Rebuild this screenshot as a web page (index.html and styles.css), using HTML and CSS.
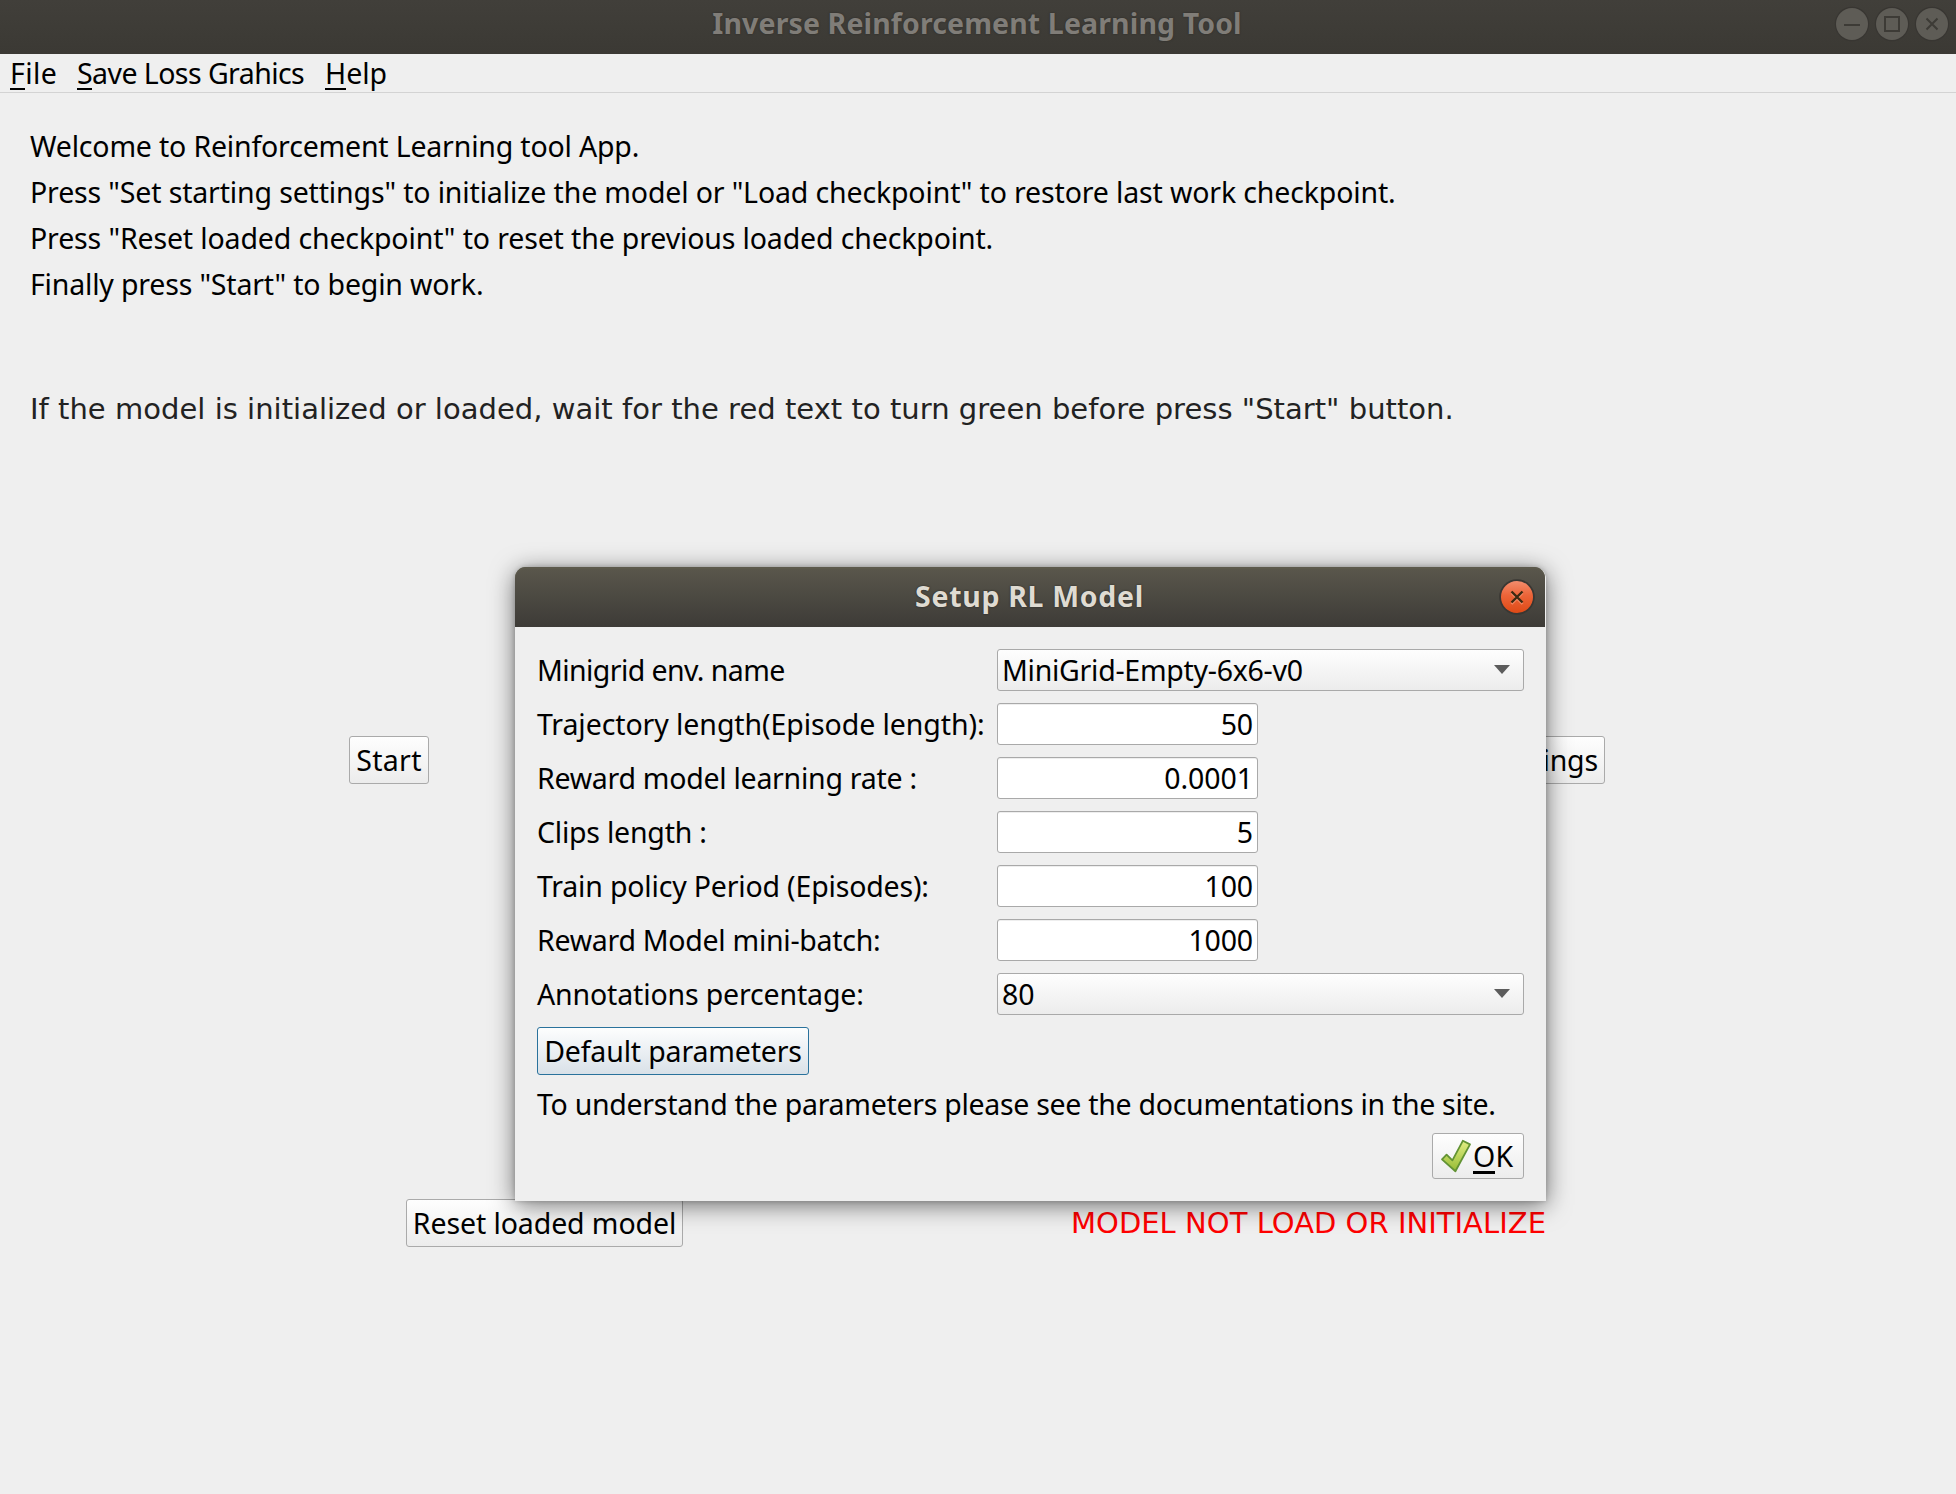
FILE: index.html
```html
<!DOCTYPE html>
<html lang="en">
<head>
<meta charset="utf-8">
<title>Inverse Reinforcement Learning Tool</title>
<link rel="stylesheet" href="styles.css">
</head>
<body>
<div class="window">
  <header class="titlebar">
    <h1 class="titlebar-text">Inverse Reinforcement Learning Tool</h1>
    <div class="window-controls">
      <svg class="control" viewBox="0 0 36 36"><circle class="ring" cx="18" cy="18" r="17.2"/><circle class="disc" cx="18" cy="18" r="16"/><path class="glyph" d="M10 19H26"/></svg>
      <svg class="control" viewBox="0 0 36 36"><circle class="ring" cx="18" cy="18" r="17.2"/><circle class="disc" cx="18" cy="18" r="16"/><path class="glyph" d="M11 11H25V25H11Z"/></svg>
      <svg class="control" viewBox="0 0 36 36"><circle class="ring" cx="18" cy="18" r="17.2"/><circle class="disc" cx="18" cy="18" r="16"/><path class="glyph" d="M12.5 12.5L23.5 23.5M23.5 12.5L12.5 23.5"/></svg>
    </div>
  </header>

  <nav class="menubar">
    <span class="menu menu-file"><span class="key">F</span>ile</span>
    <span class="menu menu-save"><span class="key">S</span>ave Loss Grahics</span>
    <span class="menu menu-help"><span class="key">H</span>elp</span>
  </nav>

  <main class="content">
    <div class="intro">
      <p class="intro-welcome">Welcome to Reinforcement Learning tool App.</p>
      <p>Press "Set starting settings" to initialize the model or "Load checkpoint" to restore last work checkpoint.</p>
      <p class="intro-reset">Press "Reset loaded checkpoint" to reset the previous loaded checkpoint.</p>
      <p class="intro-start">Finally press "Start" to begin work.</p>
    </div>
    <p class="note">If the model is initialized or loaded, wait for the red text to turn green before press "Start" button.</p>
    <div class="actions">
      <button class="button start">Start</button>
      <button class="button settings">Set starting settings</button>
    </div>
    <div class="model-row">
      <button class="button reset">Reset loaded model</button>
      <span class="status">MODEL NOT LOAD OR INITIALIZE</span>
    </div>
  </main>
</div>

<section class="dialog">
  <header class="dialog-title">
    <h2 class="dialog-title-text">Setup RL Model</h2>
    <svg class="close" viewBox="0 0 36 36">
      <defs><linearGradient id="closeFill" x1="0" y1="0" x2="0" y2="1"><stop offset="0" stop-color="#f38d6d"/><stop offset=".45" stop-color="#ec6438"/><stop offset="1" stop-color="#df4a16"/></linearGradient></defs>
      <circle class="close-ring" cx="18" cy="18" r="17.8"/>
      <circle cx="18" cy="18" r="16" fill="url(#closeFill)"/>
      <path class="close-light" d="M12.5 14L23.5 25M23.5 14L12.5 25"/>
      <path class="close-x" d="M12.5 12.5L23.5 23.5M23.5 12.5L12.5 23.5"/>
    </svg>
  </header>
  <div class="dialog-body">
    <div class="form">
      <span class="l-env">Minigrid env. name</span>
      <div class="combo"><span class="v-env">MiniGrid-Empty-6x6-v0</span><svg class="arrow" viewBox="0 0 16 9"><path d="M0 0H16L8 9Z"/></svg></div>
      <span class="l-traj">Trajectory length(Episode length):</span>
      <div class="input">50</div>
      <span class="l-rate">Reward model learning rate :</span>
      <div class="input v-rate">0.0001</div>
      <span class="l-clips">Clips length :</span>
      <div class="input">5</div>
      <span class="l-train">Train policy Period (Episodes):</span>
      <div class="input">100</div>
      <span class="l-batch">Reward Model mini-batch:</span>
      <div class="input">1000</div>
      <span class="l-annot">Annotations percentage:</span>
      <div class="combo"><span>80</span><svg class="arrow" viewBox="0 0 16 9"><path d="M0 0H16L8 9Z"/></svg></div>
    </div>
    <button class="button defaults">Default parameters</button>
    <p class="hint">To understand the parameters please see the documentations in the site.</p>
    <button class="button ok">
      <svg class="check" viewBox="0 0 32 34">
        <defs><linearGradient id="checkFill" x1="0" y1="0" x2="0" y2="1"><stop offset="0" stop-color="#e2ee84"/><stop offset="1" stop-color="#96bb34"/></linearGradient></defs>
        <path d="M2 20.4L6.6 15.6L12.4 21.4L22.8 1.8L30 5.4L15.4 32.2Z"/>
      </svg>
      <span><span class="key">O</span>K</span>
    </button>
  </div>
</section>
</body>
</html>
```
FILE: styles.css
```css
* {
  box-sizing: border-box;
}

body {
  margin: 0;
  position: relative;
  width: 1956px;
  height: 1494px;
  overflow: hidden;
  background: #efefef;
  color: #000;
  font: 28.5px/46px "Noto Sans", "Open Sans", sans-serif;
  letter-spacing: -0.15px;
  white-space: nowrap;
}

h1, h2, p {
  margin: 0;
}

.window {
  display: flex;
  flex-direction: column;
  height: 100%;
}

.titlebar {
  display: grid;
  grid-template-columns: 1fr auto 1fr;
  height: 54px;
  padding: 0 6px 6px 4px;
  align-items: center;
  background: linear-gradient(#413f3a, #3b3934);
}

.titlebar-text {
  grid-column: 2;
  padding-bottom: 2px;
  font-size: 28.5px;
  line-height: 46px;
  font-weight: 700;
  letter-spacing: 0.12px;
  color: #807d78;
  text-shadow: 0 0 2px #2a2926;
}

.window-controls {
  display: flex;
  justify-content: flex-end;
  gap: 4px;
}

.control {
  width: 36px;
  height: 36px;
}

.ring {
  fill: #383632;
}

.disc {
  fill: #5e5c56;
}

.glyph {
  fill: none;
  stroke: #3d3b36;
  stroke-width: 2;
}

.menubar {
  display: flex;
  height: 39px;
  padding-left: 10px;
  gap: 20px;
  line-height: 39px;
  border-bottom: 1px solid #d3d3d3;
}

.menu-file {
  width: 47px;
  letter-spacing: 0.4px;
}

.menu-save {
  width: 228px;
  letter-spacing: -0.56px;
}

.menu-help {
  letter-spacing: 0;
}

.key {
  display: inline-block;
  line-height: 30px;
  border-bottom: 2px solid #000;
  margin-bottom: -2px;
}

.content {
  display: flex;
  flex-direction: column;
  padding: 30px 30px 0;
}

.intro-welcome {
  letter-spacing: -0.18px;
}

.intro-reset {
  letter-spacing: -0.14px;
}

.intro-start {
  letter-spacing: -0.18px;
}

.note {
  margin-top: 84px;
  font: 29px/36px "DejaVu Sans", sans-serif;
  letter-spacing: 0.025px;
  color: #222;
}

.button {
  display: flex;
  justify-content: center;
  align-items: center;
  height: 48px;
  padding: 0;
  border: 1px solid #aaa;
  border-radius: 3px;
  background: linear-gradient(#fefefe, #ececec);
  color: #000;
  font: inherit;
  letter-spacing: inherit;
}

.actions {
  display: flex;
  justify-content: space-between;
  margin-top: 309px;
  padding: 0 321px 0 319px;
}

.start {
  width: 80px;
  letter-spacing: 0.3px;
}

.settings {
  justify-content: flex-end;
  width: 280px;
  padding-right: 6px;
  letter-spacing: -0.15px;
}

.model-row {
  display: flex;
  justify-content: space-between;
  align-items: center;
  margin-top: 415px;
  padding: 0 380px 0 376px;
}

.reset {
  width: 277px;
  letter-spacing: -0.1px;
}

.status {
  font: 29px/48px "DejaVu Sans", sans-serif;
  letter-spacing: 0.03px;
  color: #f00;
}

.dialog {
  position: absolute;
  left: 515px;
  top: 567px;
  width: 1031px;
  height: 634px;
  border-radius: 12px 12px 0 0;
  background: #efefef;
  box-shadow: 0 4px 24px rgba(0, 0, 0, 0.55), 0 0 5px rgba(0, 0, 0, 0.2);
}

.dialog-title {
  display: grid;
  grid-template-columns: 1fr auto 1fr;
  align-items: center;
  width: 1030px;
  height: 60px;
  padding: 0 10px;
  border-radius: 11px 11px 0 0;
  background: linear-gradient(#5a574c, #3d3b37);
  box-shadow: inset 0 2px 0 #5c594c;
}

.dialog-title-text {
  grid-column: 2;
  padding: 0 1px 2px 0;
  font-size: 28.5px;
  line-height: 46px;
  font-weight: 700;
  letter-spacing: 0.68px;
  color: #dfdbd2;
  text-shadow: 0 0 2px #222;
}

.close {
  justify-self: end;
  width: 36px;
  height: 36px;
}

.close-ring {
  fill: #393733;
}

.close-x,
.close-light {
  fill: none;
  stroke: #3c2a12;
  stroke-width: 2.4;
}

.close-light {
  stroke: #f58a66;
}

.dialog-body {
  display: flex;
  flex-direction: column;
  align-items: flex-start;
  gap: 12px;
  padding: 22px;
}

.form {
  display: grid;
  grid-template-columns: 448px 527px;
  grid-auto-rows: 42px;
  gap: 12px;
  line-height: 42px;
}

.combo,
.input {
  height: 42px;
  line-height: 40px;
  border: 1px solid #a9a9a9;
  border-radius: 3px;
}

.combo {
  display: flex;
  justify-content: space-between;
  align-items: center;
  padding: 0 13px 0 4px;
  background: linear-gradient(#fefefe, #ececec);
}

.arrow {
  width: 16px;
  height: 9px;
  margin-bottom: 2px;
  fill: #5c5c5c;
}

.input {
  width: 261px;
  padding-right: 4px;
  background: #fff;
  box-shadow: inset 0 1px 0 #eee;
  text-align: right;
}

.v-rate {
  letter-spacing: -0.05px;
}

.v-env,
.l-rate {
  letter-spacing: -0.27px;
}

.l-env {
  letter-spacing: -0.58px;
}

.l-traj {
  letter-spacing: -0.08px;
}

.l-clips {
  letter-spacing: -0.22px;
}

.l-train {
  letter-spacing: -0.18px;
}

.l-batch {
  letter-spacing: -0.28px;
}

.l-annot {
  letter-spacing: -0.15px;
}

.defaults {
  width: 272px;
  letter-spacing: -0.16px;
  border-color: #2a729c;
  background: linear-gradient(#fdfefe, #d9e1e8);
}

.hint {
  line-height: 34px;
  letter-spacing: -0.29px;
}

.ok {
  align-self: flex-end;
  justify-content: flex-start;
  gap: 1px;
  width: 92px;
  height: 46px;
  padding-left: 7px;
  line-height: 44px;
  letter-spacing: 0.2px;
}

.ok .key {
  border-bottom-width: 3px;
  margin-bottom: -3px;
}

.check {
  width: 32px;
  height: 34px;
}

.check path {
  fill: url(#checkFill);
  stroke: #629334;
  stroke-width: 1.8;
  stroke-linejoin: round;
}
```
